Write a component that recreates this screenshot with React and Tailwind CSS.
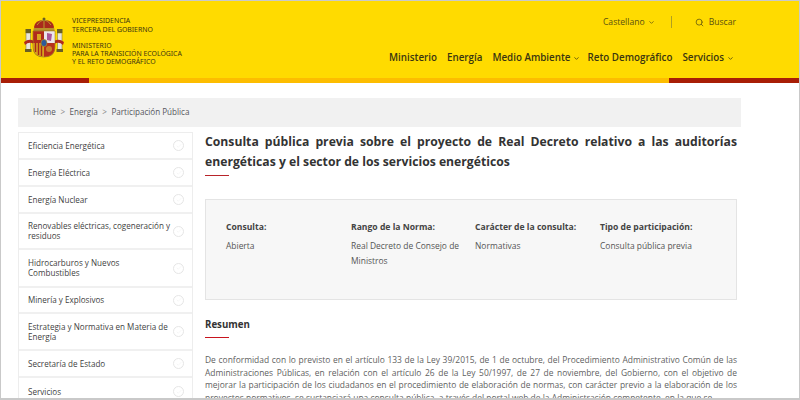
import { ChevronDown, Search, Check } from 'lucide-react';

const menu = [
  ['Eficiencia Energética', 'h-[27px]'],
  ['Energía Eléctrica', 'h-[27px]'],
  ['Energía Nuclear', 'h-[27px]'],
  ['Renovables eléctricas, cogeneración y residuos', 'h-[36px]'],
  ['Hidrocarburos y Nuevos Combustibles', 'h-[38px]'],
  ['Minería y Explosivos', 'h-[26px]'],
  ['Estrategia y Normativa en Materia de Energía', 'h-[37px]'],
  ['Secretaría de Estado', 'h-[27px]'],
  ['Servicios', 'h-[27px]'],
];

const facts = [
  ['Consulta:', 'Abierta', 'w-[125px]'],
  ['Rango de la Norma:', 'Real Decreto de Consejo de Ministros', 'w-[124px]'],
  ['Carácter de la consulta:', 'Normativas', 'w-[125px]'],
  ['Tipo de participación:', 'Consulta pública previa', 'w-[115px]'],
];

function Shield() {
  return (
    <svg width="40" height="44" viewBox="0 0 40 44" className="shrink-0">
      {/* pillars */}
      <rect x="2" y="17" width="4.5" height="17" fill="#e9e6dc" stroke="#6f6a45" strokeWidth="0.5" />
      <rect x="33.5" y="17" width="4.5" height="17" fill="#e9e6dc" stroke="#6f6a45" strokeWidth="0.5" />
      <rect x="1.5" y="13" width="5.5" height="4" fill="#6a5f24" />
      <rect x="33" y="13" width="5.5" height="4" fill="#6a5f24" />
      <rect x="1" y="33" width="6.5" height="3" fill="#6a5f24" />
      <rect x="32.5" y="33" width="6.5" height="3" fill="#6a5f24" />
      {/* ribbons */}
      <path d="M0 26 Q5 22 10 25 L10 28 Q5 25 1 29Z" fill="#b02a1c" />
      <path d="M30 25 Q35 22 40 26 L39 29 Q35 25 30 28Z" fill="#b02a1c" />
      {/* crown */}
      <path d="M10 11 Q11 4 20 4 Q29 4 30 11 L29 14 H11Z" fill="#a92a1c" />
      <path d="M13 9 Q16 4 20 4 Q24 4 27 9" fill="none" stroke="#b89a2a" strokeWidth="1" />
      <path d="M20 4 V12" stroke="#b89a2a" strokeWidth="1" />
      <rect x="9.5" y="12" width="21" height="3.5" rx="1" fill="#b8922a" />
      <circle cx="20" cy="3" r="1.5" fill="#6a5f24" />
      {/* shield quarters */}
      <path d="M9 15 H31 V31 Q31 41 20 41 Q9 41 9 31Z" fill="#c9a227" stroke="#6f4f20" strokeWidth="0.5" />
      <rect x="9.3" y="15.3" width="10.7" height="12" fill="#b02a1c" />
      <rect x="13" y="18" width="4" height="6" fill="#d9a520" />
      <rect x="20" y="15.3" width="10.7" height="12" fill="#ece6ec" />
      <path d="M23 17 L28 18 L27 25 L23 24Z" fill="#a8589a" />
      <path d="M9.3 27 H20 V40.7 Q9.3 40.7 9.3 31Z" fill="#d8a21c" />
      <path d="M11.5 27 V36 M14.5 27 V39 M17.5 27 V40" stroke="#a8281c" strokeWidth="1.4" />
      <path d="M20 27 H30.7 V31 Q30.7 40.7 20 40.7Z" fill="#b5301e" />
      <circle cx="25" cy="33" r="3" fill="#c9802a" />
      <ellipse cx="20" cy="27" rx="3" ry="3.6" fill="#2f5a9a" stroke="#b8901c" strokeWidth="0.7" />
    </svg>
  );
}

export default function App() {
  return (
    <div className="w-[800px] h-[400px] overflow-hidden bg-white border-t border-b-2 border-x border-[#c9c9c9] font-['Open_Sans',sans-serif] text-[#333]">
      <header className="h-[82px] bg-[#ffdb00] flex flex-col">
        <div className="h-[77px] flex justify-between">
          <div className="flex pl-[23px] pt-[15px] gap-[8px] text-[#3c3410] font-['Noto_Sans','Open_Sans',sans-serif]">
            <Shield />
            <div className="text-[6.9px] leading-[8px]">
              <p className="mb-[8px] leading-[9px]">VICEPRESIDENCIA<br />TERCERA DEL GOBIERNO</p>
              <p>MINISTERIO<br />PARA LA TRANSICIÓN ECOLÓGICA<br />Y EL RETO DEMOGRÁFICO</p>
            </div>
          </div>
          <div className="flex flex-col items-end pr-[62px]">
            <div className="flex items-center h-[14px] mt-[14px] mr-[1px] text-[8.6px] text-[#5a5010]">
              <span>Castellano</span>
              <ChevronDown size={7} strokeWidth={2.5} className="ml-[3px]" />
              <span className="w-px h-[12px] bg-[#b0a020] ml-[16px] mr-[23px]" />
              <Search size={9} strokeWidth={2} className="mr-[5px]" />
              <span>Buscar</span>
            </div>
            <nav className="flex items-center mt-[22px] mr-[3px] gap-[10px] text-[9.8px] font-semibold text-[#3a3510]">
              <span>Ministerio</span>
              <span>Energía</span>
              <span className="flex items-center gap-[2px]">Medio Ambiente <ChevronDown size={7} strokeWidth={2.5} className="-mr-[2px]" /></span>
              <span>Reto Demográfico</span>
              <span className="flex items-center gap-[3px]">Servicios <ChevronDown size={7} strokeWidth={2.5} /></span>
            </nav>
          </div>
        </div>
        <div className="h-[5px] flex bg-[#fdbd00]">
          <div className="w-[88px] bg-[#a81e06]" />
          <div className="flex-1" />
          <div className="w-[130px] bg-[#a81e06]" />
        </div>
      </header>

      <div className="ml-[17px] mt-[15px] w-[723px] h-[29px] bg-[#f1f1f1] flex items-center pl-[15px] gap-[4.5px] text-[8.1px] text-[#55565c]">
        <span>Home</span>
        <span className="text-[#888]">&gt;</span>
        <span>Energía</span>
        <span className="text-[#888]">&gt;</span>
        <span>Participación Pública</span>
      </div>

      <div className="flex ml-[17px] mt-[5px] gap-[12px]">
        <aside className="w-[175px] shrink-0 border border-[#ededed] self-start">
          {menu.map(([label, height]) => (
            <div key={label} className={`flex items-center justify-between pl-[9px] pr-[4px] border-b-2 border-[#f0f0f0] last:border-b-0 ${height}`}>
              <span className="w-[145px] text-[8.1px] leading-[10px] text-[#3f3f3f]">{label}</span>
              <span className="w-[11px] h-[11px] mr-[4px] rounded-full border border-[#e6e6e6] flex items-center justify-center">
                <Check size={6} strokeWidth={1.5} className="text-[#e6e6e6]" />
              </span>
            </div>
          ))}
        </aside>

        <main className="w-[532px]">
          <h1 className="text-[12.2px] leading-[20px] font-bold text-[#333] text-justify">
            Consulta pública previa sobre el proyecto de Real Decreto relativo a las auditorías energéticas y el sector de los servicios energéticos
          </h1>
          <div className="w-[24px] h-px bg-[#b8242a] mt-[3px]" />

          <div className="flex mt-[23px] h-[101px] border border-[#e4e4e4] bg-[#f7f7f7] pl-[20px] pt-[20px] text-[8.45px]">
            {facts.map(([title, value, width]) => (
              <div key={title} className={width}>
                <p className="font-bold text-[8.6px] leading-[14px] text-[#444]">{title}</p>
                <p className="mt-[4px] pr-[4px] leading-[15px] text-[#555]">{value}</p>
              </div>
            ))}
          </div>

          <h2 className="mt-[18px] text-[9.7px] leading-[14px] font-bold text-[#333]">Resumen</h2>
          <div className="w-[24px] h-px bg-[#c8141e] mt-[5px]" />

          <p className="mt-[16px] text-[8.45px] leading-[12.7px] text-[#5f5f5f] text-justify">
            De conformidad con lo previsto en el artículo 133 de la Ley 39/2015, de 1 de octubre, del Procedimiento Administrativo Común de las Administraciones Públicas, en relación con el artículo 26 de la Ley 50/1997, de 27 de noviembre, del Gobierno, con el objetivo de mejorar la participación de los ciudadanos en el procedimiento de elaboración de normas, con carácter previo a la elaboración de los proyectos normativos, se sustanciará una consulta pública, a través del portal web de la Administración competente, en la que se
          </p>
        </main>
      </div>
    </div>
  );
}
